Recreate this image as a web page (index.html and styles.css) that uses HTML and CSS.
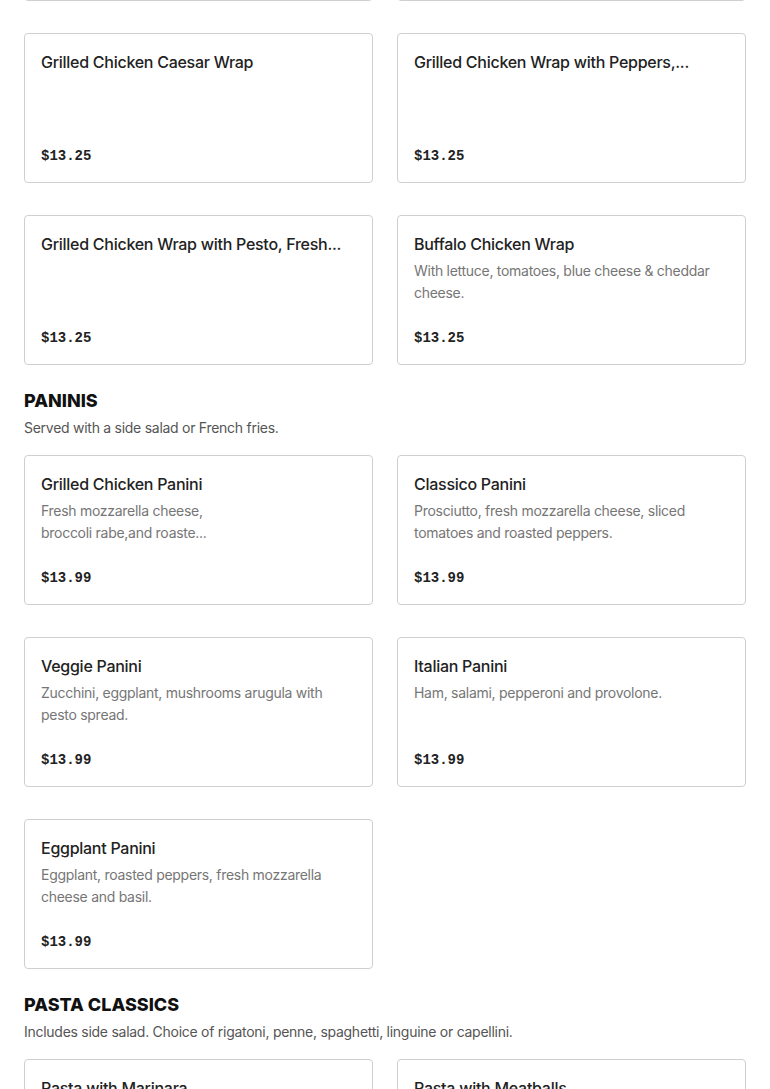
FILE: index.html
```html
<!DOCTYPE html>
<html lang="en">
<head>
<meta charset="utf-8">
<title>Menu</title>
<link rel="stylesheet" href="styles.css">
</head>
<body>
<main class="menu">
  <section class="section section-clipped">
    <div class="grid">
      <div class="card"></div>
      <div class="card"></div>
      <div class="card"><h3 class="title">Grilled Chicken Caesar Wrap</h3><p class="desc"></p><p class="price">$13.25</p></div>
      <div class="card"><h3 class="title">Grilled Chicken Wrap with Peppers,...</h3><p class="desc"></p><p class="price">$13.25</p></div>
      <div class="card"><h3 class="title">Grilled Chicken Wrap with Pesto, Fresh...</h3><p class="desc"></p><p class="price">$13.25</p></div>
      <div class="card"><h3 class="title">Buffalo Chicken Wrap</h3><p class="desc">With lettuce, tomatoes, blue cheese &amp; cheddar cheese.</p><p class="price">$13.25</p></div>
    </div>
  </section>

  <section class="section">
    <h2 class="heading">PANINIS</h2>
    <p class="subtitle">Served with a side salad or French fries.</p>
    <div class="grid">
      <div class="card"><h3 class="title">Grilled Chicken Panini</h3><p class="desc">Fresh mozzarella cheese,<br>broccoli rabe,and roaste...</p><p class="price">$13.99</p></div>
      <div class="card"><h3 class="title">Classico Panini</h3><p class="desc">Prosciutto, fresh mozzarella cheese, sliced tomatoes and roasted peppers.</p><p class="price">$13.99</p></div>
      <div class="card"><h3 class="title">Veggie Panini</h3><p class="desc">Zucchini, eggplant, mushrooms arugula with pesto spread.</p><p class="price">$13.99</p></div>
      <div class="card"><h3 class="title">Italian Panini</h3><p class="desc">Ham, salami, pepperoni and provolone.</p><p class="price">$13.99</p></div>
      <div class="card"><h3 class="title">Eggplant Panini</h3><p class="desc">Eggplant, roasted peppers, fresh mozzarella cheese and basil.</p><p class="price">$13.99</p></div>
    </div>
  </section>

  <section class="section">
    <h2 class="heading">PASTA CLASSICS</h2>
    <p class="subtitle">Includes side salad. Choice of rigatoni, penne, spaghetti, linguine or capellini.</p>
    <div class="grid">
      <div class="card"><h3 class="title">Pasta with Marinara</h3><p class="desc"></p><p class="price">$12.99</p></div>
      <div class="card"><h3 class="title">Pasta with Meatballs</h3><p class="desc"></p><p class="price">$14.99</p></div>
    </div>
  </section>
</main>
</body>
</html>
```

FILE: styles.css
```css
* { box-sizing: border-box; }
html, body { margin: 0; padding: 0; background: #fff; }
body {
  font-family: "Inter", "Liberation Sans", sans-serif;
  color: #222;
  overflow: hidden;
  height: 1089px;
}
.menu { padding: 0 24px; }
.section-clipped { margin-top: -149px; }
.section + .section { margin-top: 25px; }
.heading {
  margin: 0;
  font-size: 18px;
  line-height: 22px;
  font-weight: 800;
  color: #111;
  letter-spacing: 0;
}
.subtitle {
  margin: 5px 0 16px;
  font-size: 14px;
  line-height: 22px;
  color: #555;
  letter-spacing: -0.27px;
}
.grid {
  display: grid;
  grid-template-columns: 1fr 1fr;
  column-gap: 24px;
  row-gap: 32px;
}
.card {
  height: 150px;
  border: 1px solid #cfcfcf;
  border-radius: 4px;
  padding: 16px 16px 14px;
  display: flex;
  flex-direction: column;
}
.title {
  margin: 0;
  font-size: 16px;
  line-height: 24px;
  font-weight: 500;
  color: #222;
  letter-spacing: -0.27px;
}
.desc {
  margin: 4px 0 0;
  font-size: 14px;
  line-height: 22px;
  color: #767676;
  letter-spacing: -0.28px;
}
.price {
  margin: auto 0 0;
  font-family: "Liberation Mono", monospace;
  font-weight: 700;
  font-size: 14px;
  line-height: 24px;
  color: #222;
}
```
